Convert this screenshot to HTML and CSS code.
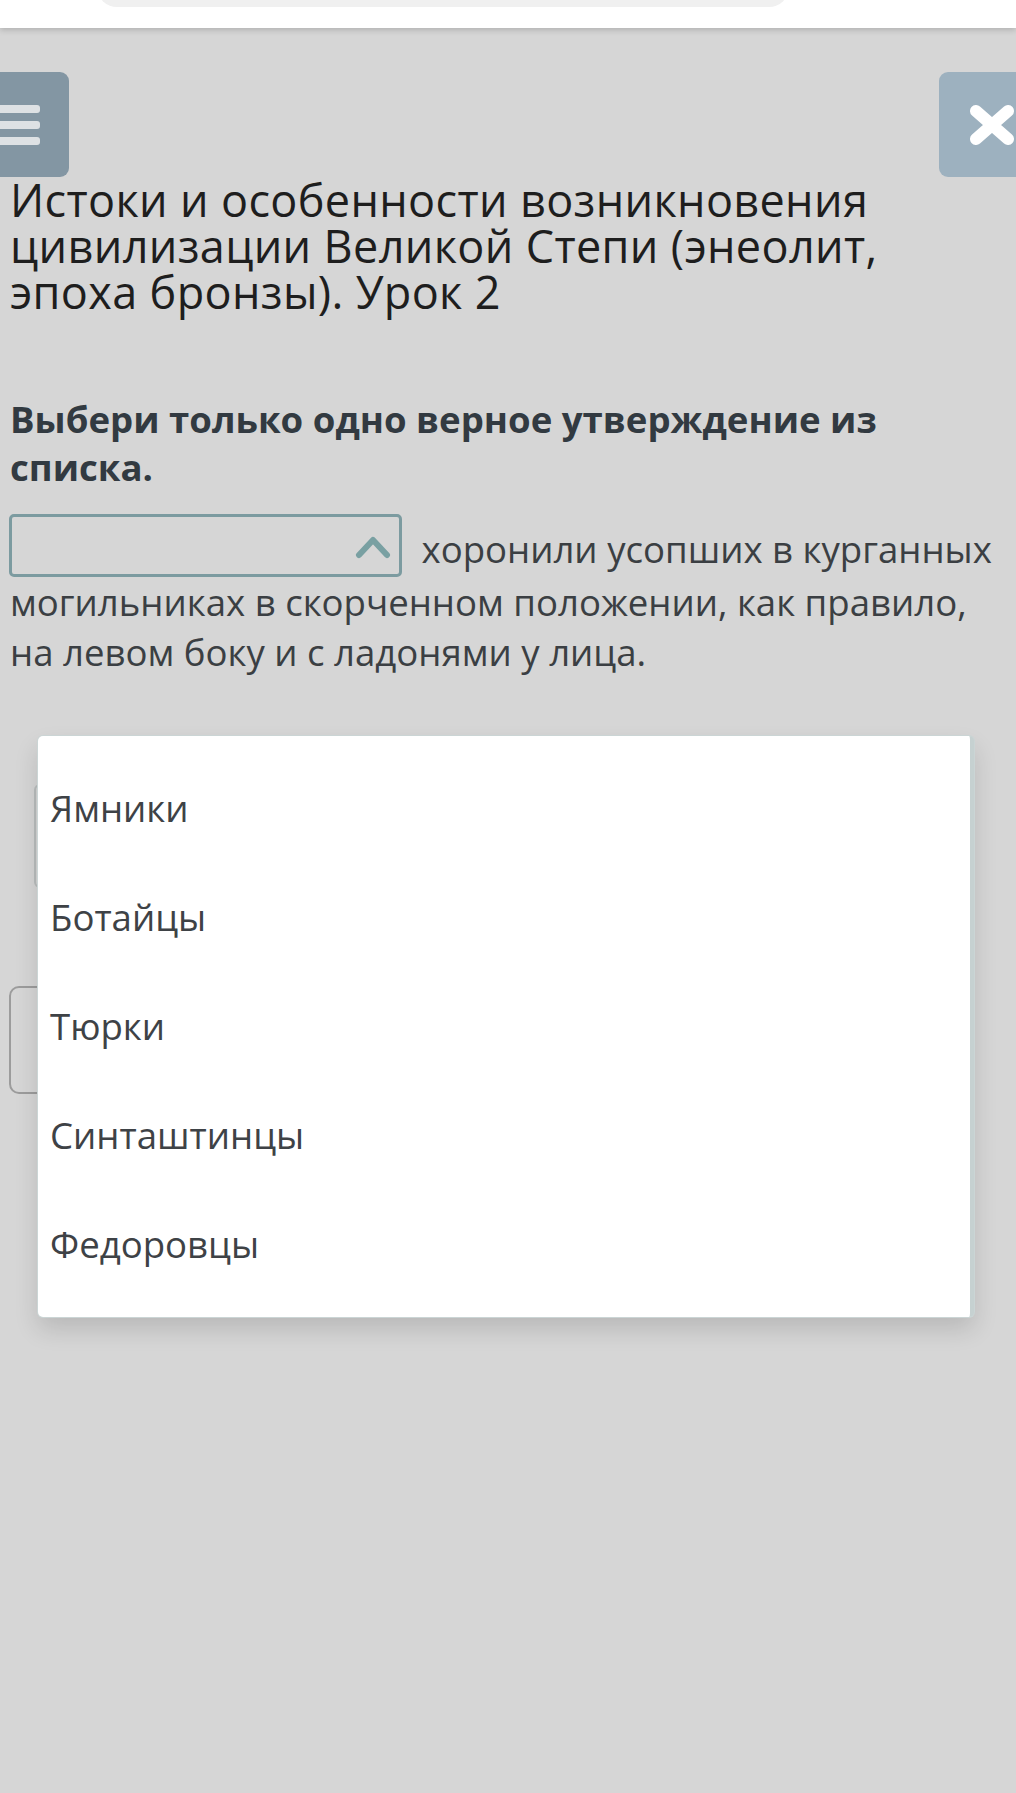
FILE: index.html
```html
<!DOCTYPE html>
<html lang="ru">
<head>
<meta charset="utf-8">
<title>Урок 2</title>
<link rel="stylesheet" href="styles.css">
</head>
<body>
<div class="topbar"><div class="pill"></div></div>
<div class="toolbar">
  <div class="menu-btn">
    <span class="bar"></span><span class="bar"></span><span class="bar"></span>
  </div>
  <div class="close-btn">
    <svg width="44" height="40" viewBox="0 0 44 40"><path d="M6 6 L38 34 M38 6 L6 34" stroke="#ffffff" stroke-width="12" stroke-linecap="round"/></svg>
  </div>
</div>
<main class="content">
  <h1 class="title">Истоки и особенности возникновения цивилизации Великой Степи (энеолит, эпоха бронзы). Урок 2</h1>
  <p class="question">Выбери только одно верное утверждение из списка.</p>
  <p class="statement"><span class="select"><svg class="chev" width="36" height="24" viewBox="0 0 36 24"><path d="M4 20 L18 5 L32 20" fill="none" stroke="#79a0a2" stroke-width="6" stroke-linecap="round" stroke-linejoin="round"/></svg></span> хоронили усопших в курганных могильниках в скорченном положении, как правило, на левом боку и с ладонями у лица.</p>
  <div class="box-a"></div>
  <div class="box-b"></div>
</main>
<ul class="dropdown">
  <li>Ямники</li>
  <li>Ботайцы</li>
  <li>Тюрки</li>
  <li>Синташтинцы</li>
  <li>Федоровцы</li>
</ul>
</body>
</html>
```
FILE: styles.css
```css
html, body {
  margin: 0;
  padding: 0;
}
body {
  background: #d6d6d6;
  font-family: "Open Sans", "Noto Sans", sans-serif;
  min-height: 1793px;
  position: relative;
  overflow: hidden;
}
.topbar {
  height: 28px;
  background: #ffffff;
  box-shadow: 0 2px 6px rgba(0,0,0,0.18);
  overflow: hidden;
  position: relative;
  z-index: 2;
}
.pill {
  margin-left: 97px;
  margin-top: -33px;
  width: 692px;
  height: 40px;
  border-radius: 20px;
  background: #f0f0f0;
}
.toolbar {
  margin-top: 44px;
  display: flex;
  justify-content: space-between;
  height: 105px;
}
.menu-btn {
  width: 69px;
  height: 105px;
  background: #8396a3;
  border-radius: 0 9px 9px 0;
  display: flex;
  flex-direction: column;
  justify-content: center;
  gap: 8px;
}
.bar {
  display: block;
  width: 40px;
  height: 8px;
  background: #dde1e4;
  border-radius: 0 3px 3px 0;
}
.close-btn {
  width: 77px;
  height: 105px;
  background: #9db1bf;
  border-radius: 9px 0 0 9px;
  display: flex;
  align-items: center;
  padding-left: 31px;
  box-sizing: border-box;
}
.content {
  padding: 0 10px;
}
.title {
  margin: 0;
  font-weight: 400;
  font-size: 45px;
  line-height: 46px;
  color: #1e1e1e;
  letter-spacing: 0.35px;
}
.question {
  margin: 80px 0 0;
  font-weight: 700;
  font-size: 36.6px;
  line-height: 48px;
  color: #323a41;
}
.statement {
  margin: 23px 0 0;
  font-size: 36.6px;
  line-height: 50px;
  color: #3b3f43;
}
.select {
  display: inline-block;
  width: 393px;
  height: 63px;
  box-sizing: border-box;
  border: 3px solid #7c9ba0;
  border-radius: 5px;
  vertical-align: -14px;
  margin-left: -1px;
  margin-right: 10px;
  position: relative;
}
.chev {
  position: absolute;
  right: 8px;
  top: 18px;
}
.box-a {
  margin: 107px 0 0 24px;
  width: 939px;
  height: 104px;
  box-sizing: border-box;
  border: 2px solid #b9bdbd;
  border-radius: 6px;
}
.box-b {
  margin: 98px 0 0 -1px;
  width: 700px;
  height: 108px;
  box-sizing: border-box;
  border: 2px solid #9c9c9c;
  border-radius: 10px;
}
.dropdown {
  position: absolute;
  left: 38px;
  top: 736px;
  width: 936px;
  height: 581px;
  box-sizing: border-box;
  margin: 0;
  padding: 18px 12px;
  list-style: none;
  background: #ffffff;
  border-radius: 5px;
  border-right: 4px solid #c6d1d1;
  box-shadow: 0 0 0 1px #cbd5d5, 0 12px 24px rgba(0,0,0,0.14);
  z-index: 3;
}
.dropdown li {
  height: 109px;
  line-height: 109px;
  font-size: 36.6px;
  color: #3e4246;
}
```
